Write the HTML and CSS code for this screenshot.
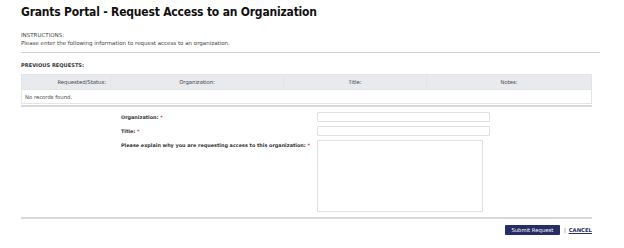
FILE: index.html
```html
<!DOCTYPE html>
<html lang="en">
<head>
    <meta charset="UTF-8">
    <meta name="viewport" content="width=device-width, initial-scale=1.0">
    <title>Grants Portal - Request Access to an Organization</title>
    <link rel="stylesheet" href="styles.css">
</head>
<body>
    <div class="page">
        <h1>Grants Portal - Request Access to an Organization</h1>

        <div class="instructions">
            <div>INSTRUCTIONS:</div>
            <div>Please enter the following information to request access to an organization.</div>
        </div>

        <hr class="divider">

        <div class="section-title">PREVIOUS REQUESTS:</div>
        <table class="requests">
            <thead>
                <tr>
                    <th class="col-status">Requested/Status:</th>
                    <th class="col-org">Organization:</th>
                    <th class="col-title">Title:</th>
                    <th class="col-notes">Notes:</th>
                </tr>
            </thead>
            <tbody>
                <tr>
                    <td colspan="4">No records found.</td>
                </tr>
            </tbody>
        </table>

        <hr class="divider thick">

        <form class="request-form" onsubmit="event.preventDefault()">
            <label for="org">Organization: <span class="req">*</span></label>
            <input type="text" id="org" name="org">

            <label for="title">Title: <span class="req">*</span></label>
            <input type="text" id="title" name="title">

            <label for="reason">Please explain why you are requesting access to this organization: <span class="req">*</span></label>
            <textarea id="reason" name="reason"></textarea>
        </form>

        <hr class="divider thick bottom">

        <div class="actions">
            <button type="button" class="submit">Submit Request</button>
            <span class="sep">|</span>
            <a href="#" class="cancel">CANCEL</a>
        </div>
    </div>
</body>
</html>
```

FILE: styles.css
```css
body {
    margin: 0;
    font-family: "DejaVu Sans", Verdana, sans-serif;
    color: #333;
    background: #fff;
}
.page {
    width: 571px;
    margin-left: 21px;
}
h1 {
    font-family: "DejaVu Sans Condensed", "DejaVu Sans", sans-serif;
    font-stretch: condensed;
    font-size: 12px;
    letter-spacing: -0.2px;
    font-weight: bold;
    color: #111;
    margin: 3px 0 0;
    line-height: 18px;
}
.instructions {
    margin-top: 10px;
    font-size: 5.5px;
    line-height: 8px;
    color: #444;
}
.divider {
    border: 0;
    border-top: 1px solid #cfcfcf;
    margin: 5px 0 0;
    width: 579px;
}
.divider.thick {
    border-top: 2px solid #d8d8d8;
    margin-top: 1px;
    width: 571px;
}
.divider.bottom {
    margin-top: 5px;
}
.section-title {
    font-size: 5.1px;
    font-weight: bold;
    color: #333;
    margin-top: 8px;
    line-height: 8px;
}
.requests {
    width: 100%;
    border-collapse: collapse;
    margin-top: 5px;
    font-size: 5.3px;
    color: #444;
}
.requests th {
    background: #e8eaee;
    font-weight: normal;
    height: 14px;
    padding: 0 4px;
    border: 1px solid #e2e4e8;
    text-align: center;
}
.requests th.col-status {
    text-align: right;
    width: 80px;
}
.requests th.col-org { width: 164px; }
.requests th.col-title { width: 134px; }
.requests td {
    height: 13px;
    padding: 0 3px;
    border: 1px solid #e4e4e4;
}
.request-form {
    display: grid;
    grid-template-columns: 196px 173px;
    grid-auto-rows: min-content;
    row-gap: 4px;
    padding-left: 100px;
    margin-top: 5px;
    font-size: 4.9px;
    font-weight: bold;
    color: #333;
}
.request-form label {
    line-height: 10px;
    white-space: nowrap;
}
.req {
    color: #d21f1f;
}
.request-form input,
.request-form textarea {
    box-sizing: border-box;
    border: 1px solid #e0e0e0;
    border-radius: 1px;
    margin: 0;
    padding: 0;
}
.request-form input {
    height: 10px;
}
.request-form textarea {
    width: 166px;
    height: 72px;
    resize: none;
    display: block;
}
.actions {
    display: flex;
    justify-content: flex-end;
    align-items: center;
    gap: 3px;
    margin-top: 6px;
    font-size: 5.3px;
}
.submit {
    background: #262c64;
    color: #fff;
    border: 0;
    border-radius: 1px;
    font-family: inherit;
    font-size: 5.3px;
    height: 10px;
    width: 55px;
    padding: 0;
    margin-right: 1px;
}
.sep {
    color: #555;
}
.cancel {
    color: #262c64;
    font-weight: bold;
    text-decoration: underline;
}
```
